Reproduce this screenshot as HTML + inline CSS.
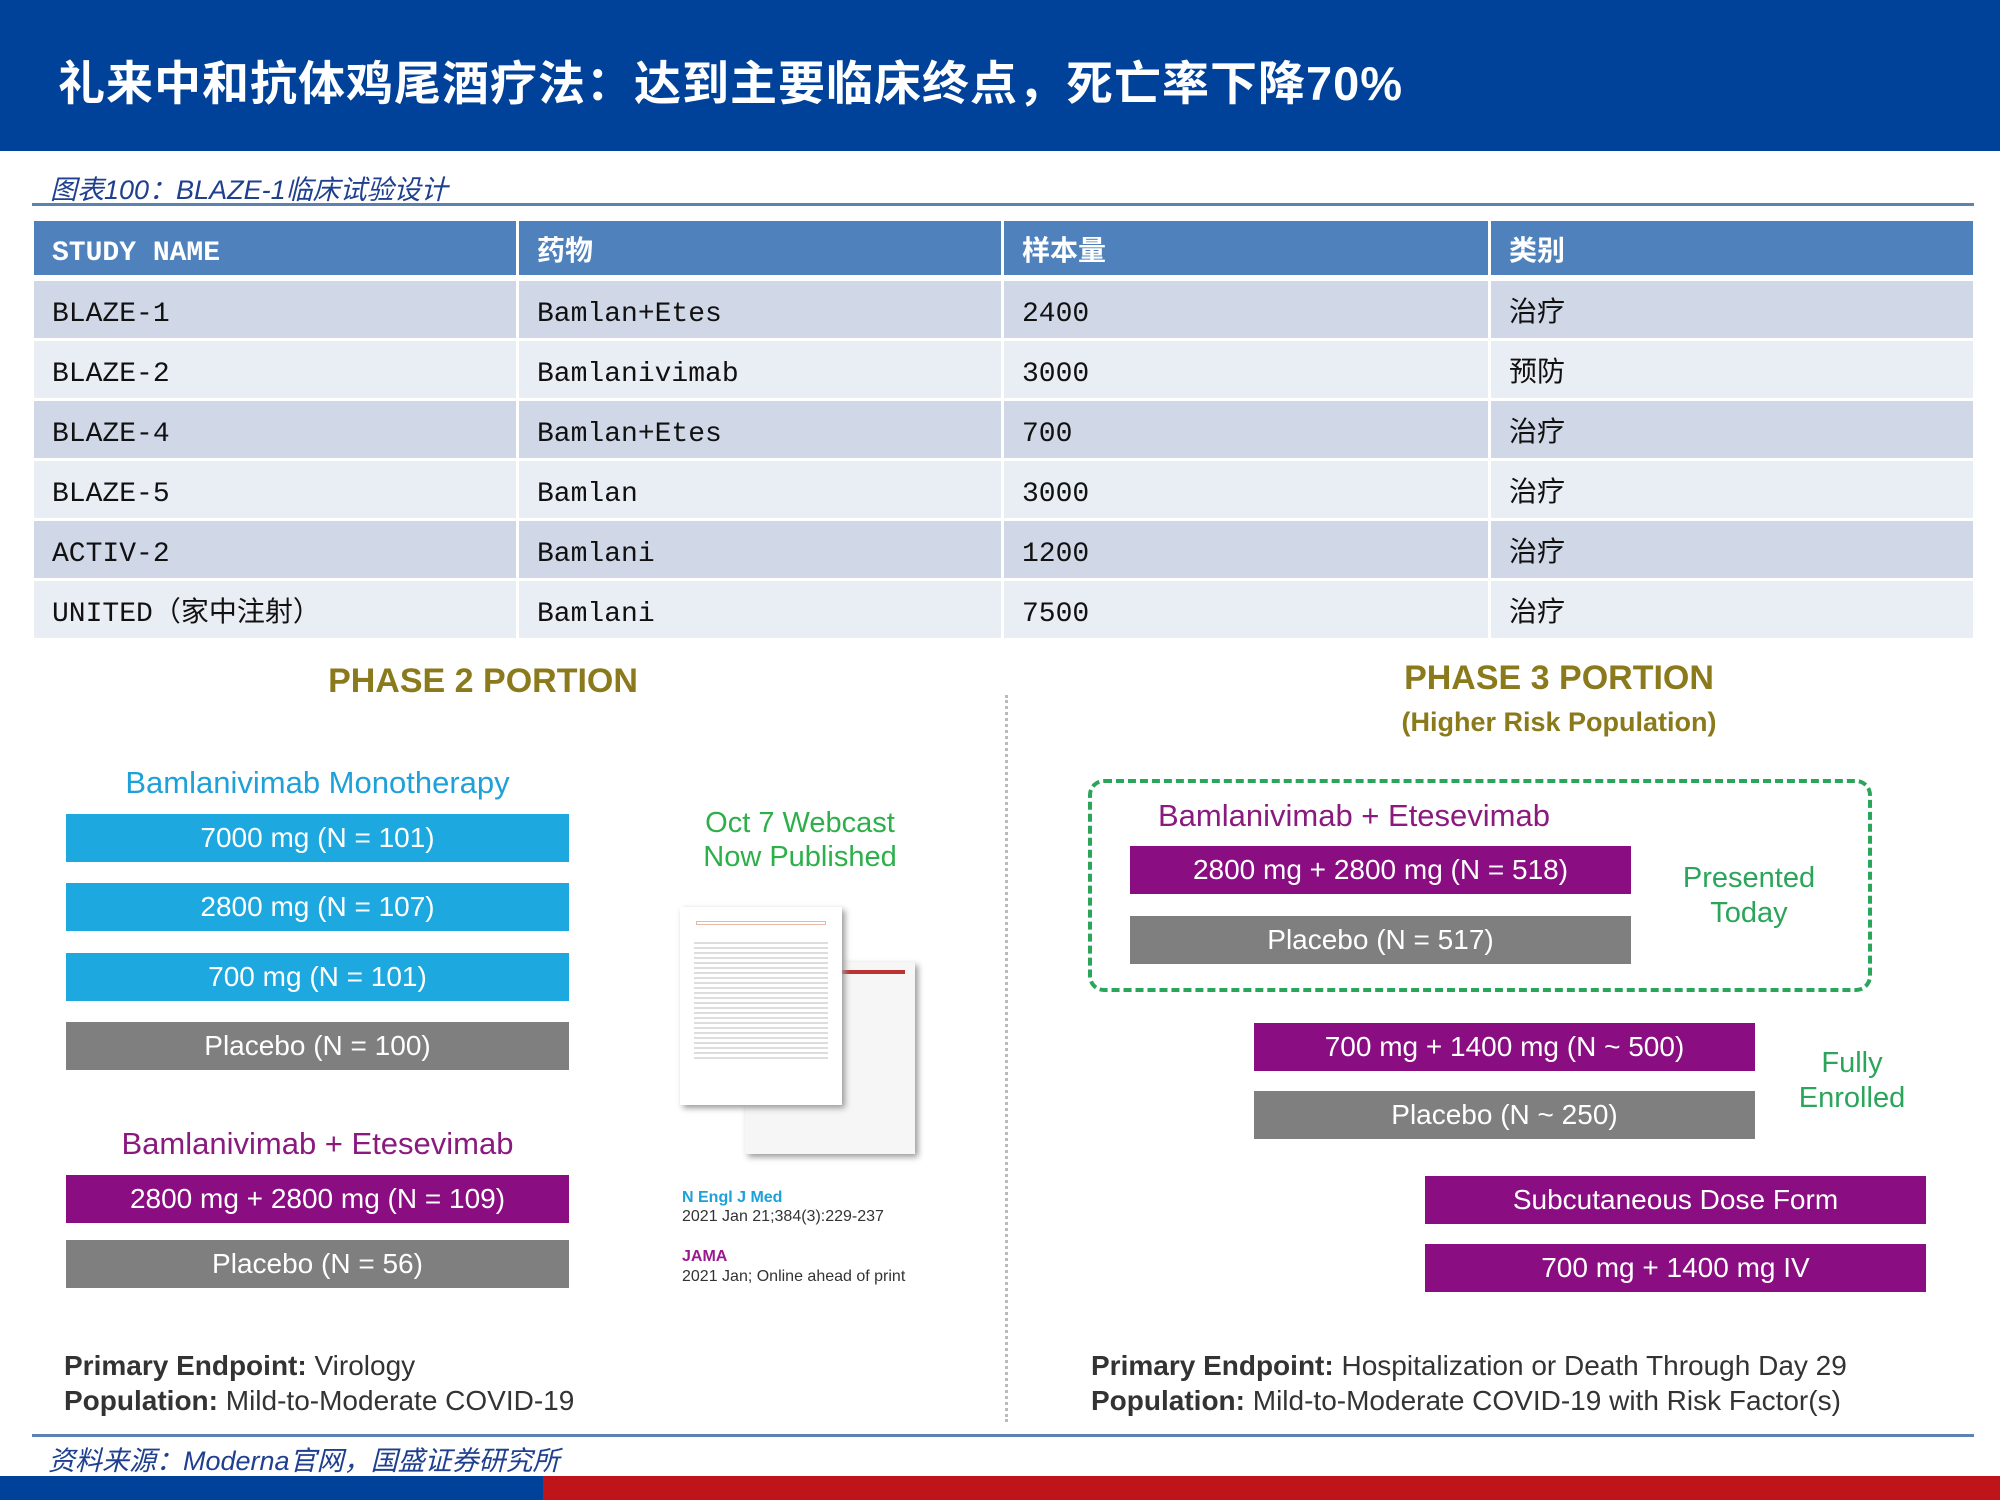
<!DOCTYPE html>
<html><head><meta charset="utf-8"><style>
*{margin:0;padding:0;box-sizing:border-box}
body{width:2000px;height:1500px;position:relative;background:#fff;overflow:hidden;font-family:"Liberation Sans","Noto Sans CJK SC",sans-serif}
.a{position:absolute;white-space:nowrap}
.hdr{left:0;top:0;width:2000px;height:151px;background:#00419a}
.title{left:58px;top:45px;font-size:47px;color:#fff;font-family:"Liberation Sans","Noto Sans CJK SC",sans-serif;font-weight:bold;letter-spacing:1px}
.cap{left:50px;top:168px;font-size:27px;color:#1f3f8f;font-style:italic}
.cell{position:absolute;height:57px;font-family:"Liberation Mono","Noto Sans CJK SC",monospace;font-size:28px;line-height:57px;padding-left:18px;padding-top:5px;color:#111}
.th{background:#4f81bd;color:#fff;font-weight:bold;height:54px;line-height:54px;padding-top:6px}
.bar{position:absolute;height:48px;color:#fff;font-size:28px;text-align:center;line-height:48px}
.cy{background:#1ea8e0}.gr{background:#7f7f7f}.pu{background:#8a0e82}
.gold{color:#8a7a1c;font-weight:bold}
.ep{font-size:28px;color:#333}
</style></head><body>
<div class="a hdr"></div>
<div class="a title">礼来中和抗体鸡尾酒疗法：达到主要临床终点，死亡率下降70%</div>
<div class="a cap">图表100：BLAZE-1临床试验设计</div>
<div class="a" style="left:32px;top:203px;width:1942px;height:3px;background:#5b82b0"></div>

<div class="cell th" style="left:34px;top:221px;width:482px">STUDY NAME</div>
<div class="cell th" style="left:519px;top:221px;width:482px">药物</div>
<div class="cell th" style="left:1004px;top:221px;width:484px">样本量</div>
<div class="cell th" style="left:1491px;top:221px;width:482px">类别</div>

<div class="cell" style="left:34px;top:281px;width:482px;background:#d0d8e8">BLAZE-1</div>
<div class="cell" style="left:519px;top:281px;width:482px;background:#d0d8e8">Bamlan+Etes</div>
<div class="cell" style="left:1004px;top:281px;width:484px;background:#d0d8e8">2400</div>
<div class="cell" style="left:1491px;top:281px;width:482px;background:#d0d8e8">治疗</div>

<div class="cell" style="left:34px;top:341px;width:482px;background:#e9edf4">BLAZE-2</div>
<div class="cell" style="left:519px;top:341px;width:482px;background:#e9edf4">Bamlanivimab</div>
<div class="cell" style="left:1004px;top:341px;width:484px;background:#e9edf4">3000</div>
<div class="cell" style="left:1491px;top:341px;width:482px;background:#e9edf4">预防</div>

<div class="cell" style="left:34px;top:401px;width:482px;background:#d0d8e8">BLAZE-4</div>
<div class="cell" style="left:519px;top:401px;width:482px;background:#d0d8e8">Bamlan+Etes</div>
<div class="cell" style="left:1004px;top:401px;width:484px;background:#d0d8e8">700</div>
<div class="cell" style="left:1491px;top:401px;width:482px;background:#d0d8e8">治疗</div>

<div class="cell" style="left:34px;top:461px;width:482px;background:#e9edf4">BLAZE-5</div>
<div class="cell" style="left:519px;top:461px;width:482px;background:#e9edf4">Bamlan</div>
<div class="cell" style="left:1004px;top:461px;width:484px;background:#e9edf4">3000</div>
<div class="cell" style="left:1491px;top:461px;width:482px;background:#e9edf4">治疗</div>

<div class="cell" style="left:34px;top:521px;width:482px;background:#d0d8e8">ACTIV-2</div>
<div class="cell" style="left:519px;top:521px;width:482px;background:#d0d8e8">Bamlani</div>
<div class="cell" style="left:1004px;top:521px;width:484px;background:#d0d8e8">1200</div>
<div class="cell" style="left:1491px;top:521px;width:482px;background:#d0d8e8">治疗</div>

<div class="cell" style="left:34px;top:581px;width:482px;background:#e9edf4">UNITED（家中注射）</div>
<div class="cell" style="left:519px;top:581px;width:482px;background:#e9edf4">Bamlani</div>
<div class="cell" style="left:1004px;top:581px;width:484px;background:#e9edf4">7500</div>
<div class="cell" style="left:1491px;top:581px;width:482px;background:#e9edf4">治疗</div>

<!-- Phase 2 -->
<div class="a gold" style="left:0;width:966px;text-align:center;top:662px;font-size:34px">PHASE 2 PORTION</div>
<div class="a" style="left:66px;width:503px;text-align:center;top:765px;font-size:31px;color:#1ea0d8">Bamlanivimab Monotherapy</div>
<div class="bar cy" style="left:66px;top:814px;width:503px">7000 mg (N = 101)</div>
<div class="bar cy" style="left:66px;top:883px;width:503px">2800 mg (N = 107)</div>
<div class="bar cy" style="left:66px;top:953px;width:503px">700 mg (N = 101)</div>
<div class="bar gr" style="left:66px;top:1022px;width:503px">Placebo (N = 100)</div>
<div class="a" style="left:66px;width:503px;text-align:center;top:1126px;font-size:31px;color:#8a1a7e">Bamlanivimab + Etesevimab</div>
<div class="bar pu" style="left:66px;top:1175px;width:503px">2800 mg + 2800 mg (N = 109)</div>
<div class="bar gr" style="left:66px;top:1240px;width:503px">Placebo (N = 56)</div>

<div class="a" style="left:650px;width:300px;text-align:center;top:806px;font-size:29px;line-height:34px;color:#2db04a">Oct 7 Webcast<br>Now Published</div>
<div class="a" style="left:745px;top:962px;width:170px;height:192px;background:#f6f6f6;box-shadow:3px 3px 6px #999">
<div style="margin:8px 10px 0 80px;height:4px;background:#b33"></div></div>
<div class="a" style="left:680px;top:907px;width:162px;height:198px;background:#fff;box-shadow:3px 3px 6px #999">
<div style="margin:14px 16px;height:4px;border:1px solid #e8b9a0"></div>
<div style="margin:8px 14px;height:120px;background:repeating-linear-gradient(#fff 0 3px,#ddd 3px 5px)"></div></div>
<div class="a" style="left:682px;top:1189px;font-size:16px;font-weight:bold;color:#1ea0d8">N Engl J Med</div>
<div class="a" style="left:682px;top:1208px;font-size:16px;color:#333">2021 Jan 21;384(3):229-237</div>
<div class="a" style="left:682px;top:1248px;font-size:16px;font-weight:bold;color:#9a1a8e">JAMA</div>
<div class="a" style="left:682px;top:1268px;font-size:16px;color:#333">2021 Jan; Online ahead of print</div>

<div class="a ep" style="left:64px;top:1348px;line-height:35px"><b>Primary Endpoint:</b> Virology<br><b>Population:</b> Mild-to-Moderate COVID-19</div>

<div class="a" style="left:1005px;top:695px;height:727px;border-left:3px dotted #bbb"></div>

<!-- Phase 3 -->
<div class="a gold" style="left:1259px;width:600px;text-align:center;top:659px;font-size:34px">PHASE 3 PORTION</div>
<div class="a gold" style="left:1259px;width:600px;text-align:center;top:707px;font-size:27px">(Higher Risk Population)</div>
<div class="a" style="left:1088px;top:779px;width:784px;height:213px;border:4px dashed #2aa55a;border-radius:16px"></div>
<div class="a" style="left:1158px;top:798px;font-size:31px;color:#8a1a7e">Bamlanivimab + Etesevimab</div>
<div class="bar pu" style="left:1130px;top:846px;width:501px">2800 mg + 2800 mg (N = 518)</div>
<div class="bar gr" style="left:1130px;top:916px;width:501px">Placebo (N = 517)</div>
<div class="a" style="left:1649px;width:200px;text-align:center;top:861px;font-size:29px;line-height:35px;color:#2aa55a">Presented<br>Today</div>
<div class="bar pu" style="left:1254px;top:1023px;width:501px">700 mg + 1400 mg (N ~ 500)</div>
<div class="bar gr" style="left:1254px;top:1091px;width:501px">Placebo (N ~ 250)</div>
<div class="a" style="left:1752px;width:200px;text-align:center;top:1046px;font-size:29px;line-height:35px;color:#2aa55a">Fully<br>Enrolled</div>
<div class="bar pu" style="left:1425px;top:1176px;width:501px">Subcutaneous Dose Form</div>
<div class="bar pu" style="left:1425px;top:1244px;width:501px">700 mg + 1400 mg IV</div>

<div class="a ep" style="left:1091px;top:1348px;line-height:35px"><b>Primary Endpoint:</b> Hospitalization or Death Through Day 29<br><b>Population:</b> Mild-to-Moderate COVID-19 with Risk Factor(s)</div>

<div class="a" style="left:32px;top:1434px;width:1942px;height:3px;background:#5b82b0"></div>
<div class="a" style="left:48px;top:1439px;font-size:27px;color:#1f3f8f;font-style:italic">资料来源：Moderna官网，国盛证券研究所</div>
<div class="a" style="left:0;top:1476px;width:543px;height:24px;background:#00419a"></div>
<div class="a" style="left:543px;top:1476px;width:1457px;height:24px;background:#c0141b"></div>
</body></html>
